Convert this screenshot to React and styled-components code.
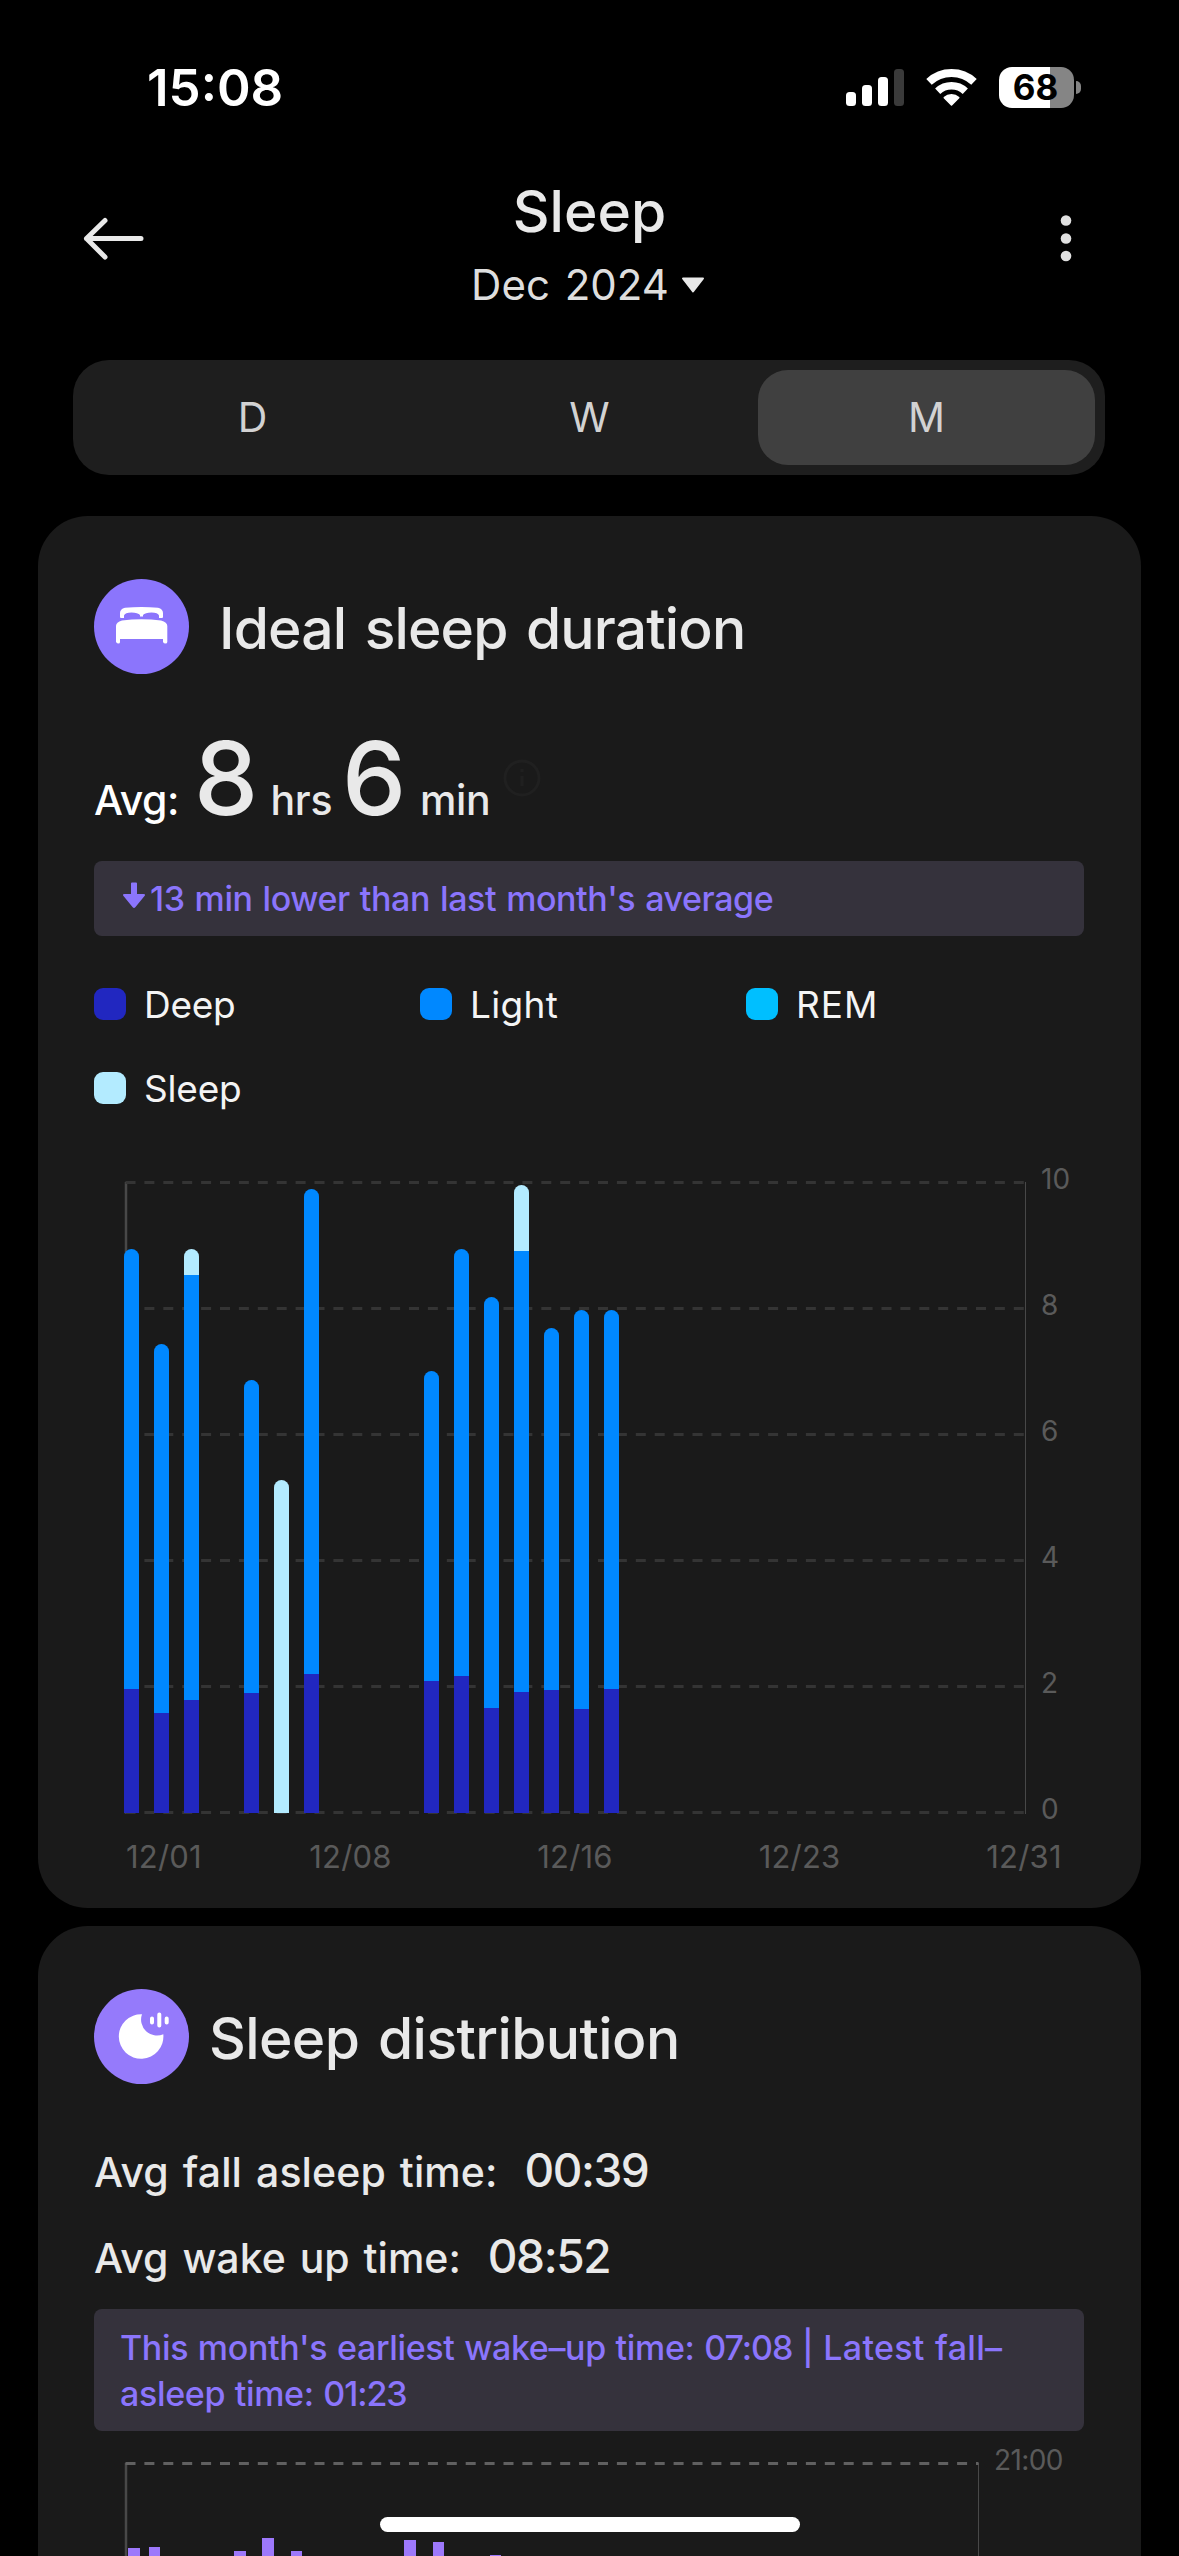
import React from "react";
import styled, { createGlobalStyle } from "styled-components";

const Global = createGlobalStyle`
  * { box-sizing: border-box; }
  body { margin: 0; background: #000; font-family: Inter, "Liberation Sans", sans-serif; color: #e9e9e9; }
`;

const Screen = styled.div`
  width: 1179px;
  height: 2556px;
  overflow: hidden;
  background: #000;
  display: flex;
  flex-direction: column;
  position: relative;
`;

const Txt = styled.span`
  display: block;
  white-space: nowrap;
  font-size: ${(p) => p.$size}px;
  line-height: ${(p) => p.$line ?? p.$size}px;
  font-weight: ${(p) => p.$weight ?? 400};
  letter-spacing: ${(p) => p.$track ?? 0}px;
  word-spacing: ${(p) => p.$word ?? 0}px;
  color: ${(p) => p.$color ?? "#e9e9e9"};
`;

const Run = styled.span`
  letter-spacing: ${(p) => p.$track}px;
`;

const StatusBar = styled.div`
  height: 176px;
  flex: none;
  display: flex;
  justify-content: space-between;
  padding: 62px 98px 0 147px;
`;

const StatusIcons = styled.div`
  display: flex;
  align-items: center;
  height: 51px;
`;

const Header = styled.header`
  height: 184px;
  flex: none;
  display: grid;
  grid-template-columns: 180px 1fr 180px;
  padding-top: 7px;
`;

const IconSlot = styled.div`
  padding-top: 25px;
  padding-left: ${(p) => p.$left}px;
`;

const Titles = styled.div`
  display: flex;
  flex-direction: column;
  align-items: center;
`;

const MonthPicker = styled.div`
  display: flex;
  align-items: center;
  gap: 12px;
  margin-top: 24px;
  margin-right: 3px;
`;

const Tabs = styled.nav`
  flex: none;
  height: 115px;
  margin: 0 74px 0 73px;
  padding: 10px 10px 10px 11px;
  border-radius: 36px;
  background: #1e1e1e;
  display: grid;
  grid-template-columns: 1fr 1fr 1fr;
`;

const Tab = styled.div`
  display: flex;
  align-items: center;
  justify-content: center;
  border-radius: 30px;
  background: ${(p) => (p.$active ? "#404040" : "transparent")};
`;

const Card = styled.section`
  flex: none;
  height: ${(p) => p.$height}px;
  margin: ${(p) => p.$top}px 38px 0;
  padding: 63px 57px 0 56px;
  border-radius: 50px;
  background: #1a1a1a;
`;

const CardHead = styled.div`
  display: flex;
  align-items: center;
  gap: ${(p) => p.$gap}px;
  height: 95px;
`;

const CardTitle = styled(Txt)`
  padding-top: 4px;
`;

const Average = styled.div`
  display: flex;
  align-items: baseline;
  height: 102px;
  margin-top: 53px;
`;

const AverageText = styled(Txt)`
  width: ${(p) => p.$width}px;
`;

const InfoSlot = styled.div`
  align-self: center;
  height: 40px;
`;

const Banner = styled.div`
  display: flex;
  height: ${(p) => p.$height}px;
  margin-top: ${(p) => p.$top}px;
  padding: ${(p) => p.$pad};
  gap: 4px;
  border-radius: 8px;
  background: #35323c;
`;

const Legend = styled.div`
  display: grid;
  grid-template-columns: 326px 326px 326px;
  row-gap: 40px;
  margin-top: 46px;
`;

const LegendItem = styled.div`
  display: flex;
  align-items: center;
  gap: 18px;
  height: 44px;
`;

const Swatch = styled.i`
  width: 32px;
  height: 32px;
  border-radius: 9px;
  background: ${(p) => p.$color};
`;

const ChartRow = styled.div`
  display: flex;
  margin: ${(p) => p.$top}px 0 0 31px;
`;

const Plot = styled.div`
  position: relative;
  flex: none;
  width: ${(p) => p.$width}px;
  height: ${(p) => p.$height}px;
`;

const GridSvg = styled.svg`
  display: block;
  overflow: visible;
`;

const Bars = styled.div`
  position: absolute;
  left: ${(p) => p.$left ?? 0}px;
  bottom: 1px;
  display: flex;
  align-items: flex-end;
  gap: ${(p) => p.$gap}px;
`;

const Bar = styled.div`
  display: flex;
  flex-direction: column;
  width: 15.4px;
  border-radius: 8px 8px 0 0;
  overflow: hidden;
`;

const Segment = styled.div`
  flex: none;
  background: ${(p) => p.$color};
`;

const Scale = styled.div`
  display: flex;
  flex-direction: column;
  justify-content: space-between;
  height: 658px;
  margin-top: ${(p) => p.$top}px;
  padding-left: ${(p) => p.$left}px;
`;

const Dates = styled.div`
  display: grid;
  grid-template-columns: 148px 225px 224px 225px 224px;
  margin: 18px 0 0 -4px;
  text-align: center;
`;

const TimeRow = styled.div`
  display: flex;
  align-items: baseline;
  gap: ${(p) => p.$gap}px;
  height: 86px;
`;

const Times = styled.div`
  margin-top: 63px;
`;

const SpanBar = styled.div`
  position: absolute;
  bottom: 0;
  width: 11.6px;
  background: #9d78fb;
`;

const HomeIndicator = styled.div`
  position: absolute;
  left: 380px;
  top: 2517px;
  width: 420px;
  height: 15px;
  border-radius: 8px;
  background: #fff;
`;

const DEEP = "#2127c0";
const LIGHT = "#0088ff";
const REM = "#00bfff";
const SLEEP = "#b3ebff";

const legend = [
  ["Deep", DEEP, -0.3],
  ["Light", LIGHT, 0.3],
  ["REM", REM, 1],
  ["Sleep", SLEEP, -0.2],
];

/* heights of the sleep, light and deep segments of each day */
const days = [
  [0, 439.5, 124.5],
  [0, 368.5, 100.5],
  [26.5, 425, 113],
  [0, 0, 0],
  [0, 313, 120],
  [333, 0, 0],
  [0, 484.5, 139.5],
  [0, 0, 0],
  [0, 0, 0],
  [0, 0, 0],
  [0, 310, 132],
  [0, 427, 137],
  [0, 411, 105.5],
  [66, 440.5, 121.5],
  [0, 362, 123.5],
  [0, 399.5, 104],
  [0, 379.5, 124],
];

/* left offset and visible height of each night */
const nights = [
  [3.3, 8], [23.5, 9.5], [109, 5], [137, 18], [165.5, 5], [279, 16], [307.5, 14.5], [364.5, 1],
];

const AXIS_TEXT = "#5a5a5a";

function Grid({ width, height, lines, step, color, right }) {
  return (
    <GridSvg width={width} height={height} viewBox={`0 0 ${width} ${height}`}>
      <line x1="1" y1="1" x2="1" y2={height} stroke="#484848" strokeWidth="2.5" />
      <line x1={right} y1="1" x2={right} y2={height} stroke="#484848" strokeWidth="1" />
      {Array.from({ length: lines }, (_, i) => (
        <line key={i} x1="0.5" x2={right} y1={1.5 + i * step} y2={1.5 + i * step}
          stroke={color} strokeWidth="3" strokeDasharray="10 8.9" />
      ))}
    </GridSvg>
  );
}

function Signal() {
  return (
    <svg width="60" height="40" viewBox="0 0 60 40">
      <rect x="0" y="24" width="10" height="14" rx="3.500" fill="#fff" />
      <rect x="16" y="17" width="10" height="21" rx="3.500" fill="#fff" />
      <rect x="32" y="9" width="10" height="29" rx="3.500" fill="#fff" />
      <rect x="48" y="1" width="10" height="37" rx="3.500" fill="#3a3a3a" />
    </svg>
  );
}

function Wifi() {
  return (
    <svg width="52" height="40" viewBox="0 0 52 40">
      <g transform="translate(0 1)">
        <path d="M3 12.900A33 33 0 0 1 48 12.900" fill="none" stroke="#fff" strokeWidth="8" />
        <path d="M11.700 22.200A20.300 20.300 0 0 1 39.300 22.200" fill="none" stroke="#fff" strokeWidth="7.600" />
        <path d="M25.500 36L18.300 28.700A10.500 10.500 0 0 1 32.700 28.700Z" fill="#fff" stroke="#fff" strokeWidth="1.600" strokeLinejoin="round" />
      </g>
    </svg>
  );
}

const Battery = styled.div`
  display: flex;
  align-items: center;
  justify-content: center;
  width: 75px;
  height: 41px;
  padding-right: 1px;
  border-radius: 13px;
  background: linear-gradient(90deg, #fff 68%, #858585 68%);
`;

const BatteryTip = styled.i`
  width: 5px;
  height: 13px;
  margin-left: 2.5px;
  border-radius: 0 6px 6px 0;
  background: #858585;
`;

const Spacer = styled.i`
  width: ${(p) => p.$w}px;
`;

export default function App() {
  return (
    <Screen>
      <Global />
      <StatusBar>
        <Txt $size={51} $weight={600} $color="#fff" $line={52}>15:08</Txt>
        <StatusIcons>
          <Signal />
          <Spacer $w={20} />
          <Wifi />
          <Spacer $w={21} />
          <Battery><Txt $size={35} $weight={700} $color="#000">68</Txt></Battery>
          <BatteryTip />
        </StatusIcons>
      </StatusBar>

      <Header>
        <IconSlot $left={82}>
          <svg width="64" height="60" viewBox="0 0 64 60" fill="none" stroke="#e9e9e9" strokeWidth="5" strokeLinecap="round" strokeLinejoin="round">
            <path d="M4.500 30.500H59M23 12.500L4.500 30.500L23 49" />
          </svg>
        </IconSlot>
        <Titles>
          <Txt $size={57} $weight={500}>Sleep</Txt>
          <MonthPicker>
            <Txt $size={42} $word={3} $color="#dedede">Dec 2024</Txt>
            <svg width="24" height="16" viewBox="0 0 24 16">
              <path d="M2 1.500H22L12 14.500Z" fill="#e9e9e9" stroke="#e9e9e9" strokeWidth="2" strokeLinejoin="round" />
            </svg>
          </MonthPicker>
        </Titles>
        <IconSlot $left={60}>
          <svg width="14" height="60" viewBox="0 0 14 60" fill="#e0e0e0">
            <circle cx="7" cy="12.500" r="5.300" />
            <circle cx="7" cy="30.500" r="5.300" />
            <circle cx="7" cy="48" r="5.300" />
          </svg>
        </IconSlot>
      </Header>

      <Tabs>
        {["D", "W", "M"].map((t) => (
          <Tab key={t} $active={t === "M"}><Txt $size={41} $color="#d2d2d2">{t}</Txt></Tab>
        ))}
      </Tabs>

      <Card $height={1392} $top={41}>
        <CardHead $gap={30}>
          <svg width="95" height="95" viewBox="0 0 95 95">
            <circle cx="47.500" cy="47.500" r="47.500" fill="#8b75fc" />
            <path fill="#fff" d="M26 38V34Q26 30 31 28.800Q47.500 27 64 28.800Q69 30 69 34V38Q69 39 68 39H65V36.500Q64 33.500 57.500 33.500T49 36V37.500H46V36Q44 33.500 37.500 33.500T30 36.500V39H27Q26 39 26 38Z" />
            <path fill="#fff" d="M22 63V47Q22 43 28 41.500Q47.500 39 67 41.500Q73.300 43 73.300 47V63Q73.300 64.500 71.500 64.500T69 63V60H26V63Q26 64.500 24.500 64.500T22 63Z" />
          </svg>
          <CardTitle $size={57} $weight={500} $track={-0.85} $word={4}>Ideal sleep duration</CardTitle>
        </CardHead>
        <Average>
          <AverageText $width={100} $size={41} $weight={500} $color="#fff" $track={-0.5}>Avg:</AverageText>
          <AverageText $width={76.5} $size={102} $weight={500}>8</AverageText>
          <AverageText $width={71.5} $size={41} $weight={500} $track={-0.3}>hrs</AverageText>
          <AverageText $width={78} $size={102} $weight={500}>6</AverageText>
          <AverageText $width={82} $size={41} $weight={500} $track={-0.4}>min</AverageText>
          <InfoSlot>
            <svg width="40" height="40" viewBox="0 0 40 40" fill="none" stroke="#202020" strokeWidth="3">
              <circle cx="20" cy="20" r="17" />
              <path d="M20 18V28M20 11V14" />
            </svg>
          </InfoSlot>
        </Average>
        <Banner $height={75} $top={32} $pad="20px 0 0 28px">
          <svg width="24" height="30" viewBox="0 0 24 30">
            <path fill="#8b75fc" d="M9 2.500Q9 1.500 10 1.500H14Q15 1.500 15 2.500V13H21.500Q24 13 22.500 15L13.300 26.300Q12 27.500 10.700 26.300L1.500 15Q0 13 2.500 13H9Z" />
          </svg>
          <Txt $size={34} $line={36} $weight={500} $track={-0.4} $word={1.3} $color="#8b75fc">13 min lower than last month's average</Txt>
        </Banner>
        <Legend>
          {legend.map(([name, color, track]) => (
            <LegendItem key={name}>
              <Swatch $color={color} />
              <Txt $size={37} $track={track} $color="#f4f4f4">{name}</Txt>
            </LegendItem>
          ))}
        </Legend>
        <ChartRow $top={71}>
          <Plot $width={902} $height={633}>
            <Grid width={902} height={633} lines={6} step={126} color="#343434" right={900.5} />
            <Bars $left={-1} $gap={14.6}>
              {days.map(([s, l, d], i) => (
                <Bar key={i}>
                  <Segment $color={SLEEP} style={{ height: s }} />
                  <Segment $color={LIGHT} style={{ height: l }} />
                  <Segment $color={DEEP} style={{ height: d }} />
                </Bar>
              ))}
            </Bars>
          </Plot>
          <Scale $left={14} $top={-16}>
            {[10, 8, 6, 4, 2, 0].map((n) => (
              <Txt key={n} $size={28} $color={AXIS_TEXT}>{n}</Txt>
            ))}
          </Scale>
        </ChartRow>
        <Dates>
          {["12/01", "12/08", "12/16", "12/23", "12/31"].map((d) => (
            <Txt key={d} $size={31} $track={0.2} $color={AXIS_TEXT}>{d}</Txt>
          ))}
        </Dates>
      </Card>

      <Card $height={700} $top={18}>
        <CardHead $gap={20}>
          <svg width="95" height="95" viewBox="0 0 95 95">
            <circle cx="47.500" cy="47.500" r="47.500" fill="#957afb" />
            <path fill="#fff" d="M48 25.200A22.300 22.300 0 1 0 69.300 45.300A16 16 0 0 1 48 25.200Z" />
            <path stroke="#fff" strokeWidth="4" strokeLinecap="round" d="M58 29.500V33.500M65.300 25.500V36.500M72.700 29.500V33.500" />
          </svg>
          <CardTitle $size={57} $weight={500} $track={-0.6} $word={4}>Sleep distribution</CardTitle>
        </CardHead>
        <Times>
          <TimeRow $gap={27}>
            <Txt $size={41} $weight={500} $track={0.1} $word={3}>Avg fall asleep time:</Txt>
            <Txt $size={46} $weight={500} $track={-1.5}>00:39</Txt>
          </TimeRow>
          <TimeRow $gap={27}>
            <Txt $size={41} $weight={500} $word={3}>Avg wake up time:</Txt>
            <Txt $size={46} $weight={500} $track={-1.4}>08:52</Txt>
          </TimeRow>
        </Times>
        <Banner $height={122} $top={-10} $pad="16px 0 0 26px">
          <Txt $size={34} $line={46} $weight={500} $track={-0.35} $word={1} $color="#8b75fc">
            This month's earliest wake–up time: <Run $track={-1}>07:08</Run> | <Run $track={0.3}>Latest fall–</Run><br />asleep time: <Run $track={-1.1}>01:23</Run>
          </Txt>
        </Banner>
        <ChartRow $top={31}>
          <Plot $width={855} $height={94}>
            <Grid width={855} height={94} lines={1} step={0} color="#606060" right={853.5} />
            {nights.map(([x, h]) => (
              <SpanBar key={x} style={{ left: x, height: h }} />
            ))}
          </Plot>
          <Scale $left={14} $top={-16.5}>
            <Txt $size={28} $track={-0.6} $color={AXIS_TEXT}>21:00</Txt>
          </Scale>
        </ChartRow>
      </Card>
      <HomeIndicator />
    </Screen>
  );
}
